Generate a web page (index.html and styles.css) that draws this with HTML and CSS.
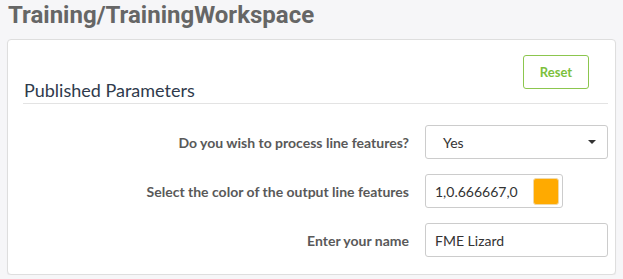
FILE: index.html
```html
<!DOCTYPE html>
<html lang="en">
<head>
  <meta charset="UTF-8" />
  <title>Training/TrainingWorkspace</title>
  <link rel="stylesheet" href="styles.css">
</head>
<body>
  <h1 class="page-title">Training/TrainingWorkspace</h1>

  <div class="panel">
    <div class="panel-head">
      <h2>Published Parameters</h2>
      <button class="btn-reset">Reset</button>
    </div>

    <form class="params">
      <label class="param-label" for="lineFeatures">Do you wish to process line features?</label>
      <div class="select-box" id="lineFeatures">
        <span>Yes</span>
        <span class="caret"></span>
      </div>

      <label class="param-label" for="lineColor">Select the color of the output line features</label>
      <div class="color-box" id="lineColor">
        <span>1,0.666667,0</span>
        <span class="swatch"></span>
      </div>

      <label class="param-label" for="userName">Enter your name</label>
      <div class="text-box" id="userName">FME Lizard</div>
    </form>
  </div>
</body>
</html>
```

FILE: styles.css
```css
body {
  margin: 0;
  padding: 0 7px;
  background: #f6f6f8;
  font-family: 'Lato', sans-serif;
}

.page-title {
  margin: 0 0 9px 1px;
  font-family: 'Roboto', sans-serif;
  font-size: 24px;
  font-weight: 700;
  line-height: 30px;
  color: #666;
}

.panel {
  background: white;
  border: 1px solid #dedede;
  border-radius: 4px;
  padding: 0 7px 17px 15px;
  box-shadow: 0 1px 1px rgba(0,0,0,0.05);
}

.panel-head {
  display: flex;
  justify-content: space-between;
  align-items: flex-start;
  padding-top: 15px;
  padding-bottom: 2px;
  border-bottom: 1px solid #e3e3e3;
}

.panel-head h2 {
  margin: 24px 0 0 1px;
  font-size: 18px;
  font-weight: 400;
  line-height: 22px;
  color: #2f3a4c;
}

.btn-reset {
  width: 66px;
  height: 34px;
  margin-right: 19px;
  background: white;
  border: 1px solid #8cc64e;
  border-radius: 3px;
  color: #7cbf3c;
  font-family: 'Lato', sans-serif;
  font-size: 13px;
  font-weight: 700;
}

.params {
  display: grid;
  grid-template-columns: 1fr 183px;
  column-gap: 16px;
  row-gap: 15px;
  align-items: center;
  margin-top: 21px;
}

.param-label {
  text-align: right;
  font-size: 14px;
  font-weight: 700;
  color: #595959;
}

.select-box, .color-box, .text-box {
  box-sizing: border-box;
  height: 34px;
  border: 1px solid #ccc;
  border-radius: 3px;
  display: flex;
  align-items: center;
  font-size: 14px;
  color: #333;
}

.select-box {
  justify-content: space-between;
  padding: 0 11px 0 17px;
}

.caret {
  width: 0;
  height: 0;
  border-left: 4px solid transparent;
  border-right: 4px solid transparent;
  border-top: 4px solid #333;
}

.color-box {
  width: 138px;
  justify-content: space-between;
  padding: 0 3px 0 9px;
}

.swatch {
  width: 26px;
  height: 27px;
  background: #ffaa00;
  border: 1px solid #f0d9a8;
  border-radius: 3px;
  box-sizing: border-box;
}

.text-box {
  padding: 0 9px;
}
```
